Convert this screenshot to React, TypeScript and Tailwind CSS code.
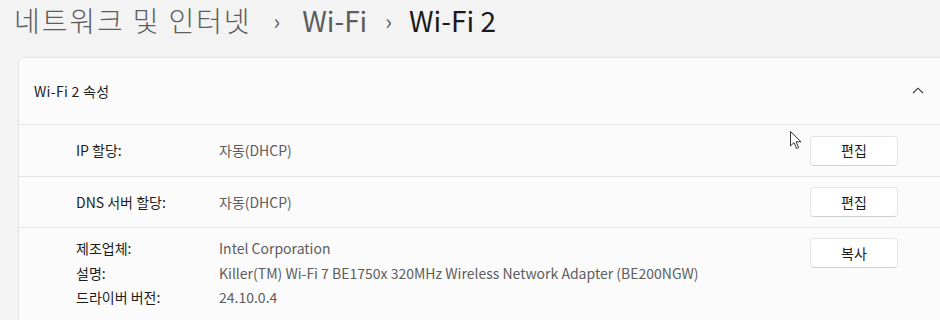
import React from "react";

const font = { fontFamily: '"Segoe UI", "Noto Sans CJK KR", sans-serif' };

function Btn({ children }: { children: React.ReactNode }) {
  return (
    <button className="w-[88px] h-[30px] shrink-0 rounded-[4px] bg-white border border-[#e5e5e5] border-b-[#cfcfcf] text-[14px] text-[#1b1b1b] flex items-center justify-center">
      {children}
    </button>
  );
}

function Cursor() {
  return (
    <svg
      className="absolute left-[789px] top-[130px]"
      width="14"
      height="21"
      viewBox="0 0 14 21"
    >
      <path
        d="M1.5 1.5 L1.5 16 L5 12.6 L7.6 18.5 L9.6 17.6 L7.1 11.8 L12 11.8 Z"
        fill="#fff"
        stroke="#333"
        strokeWidth="1"
        strokeLinejoin="round"
      />
    </svg>
  );
}

export default function App() {
  return (
    <div
      className="relative w-[940px] h-[320px] overflow-hidden bg-[#f3f3f3]"
      style={font}
    >
      <div className="h-[57px] pl-[14px] flex items-start pt-[1px] text-[28px] leading-[38px]">
        <span className="text-[#5c5c5c] tracking-[1.9px] font-light">네트워크 및 인터넷</span>
        <span className="text-[#5c5c5c] text-[22px] ml-[22px] mr-[22px]">›</span>
        <span className="text-[#5c5c5c]">Wi-Fi</span>
        <span className="text-[#5c5c5c] text-[22px] ml-[18px] mr-[17px]">›</span>
        <span className="text-[#1a1a1a]">Wi-Fi 2</span>
      </div>
      <div className="ml-[18px] w-[940px] rounded-t-[6px] border border-[#e5e5e5] bg-[#fbfbfb]">
        <div className="h-[67px] flex items-center pl-[15px] border-b border-[#e5e5e5]">
          <span className="text-[14px] text-[#1b1b1b] tracking-[0.3px]">Wi-Fi 2 속성</span>
          <svg
            className="ml-auto mr-[33px]"
            width="12"
            height="8"
            viewBox="0 0 12 8"
          >
            <path d="M1 6 L6 1.2 L11 6" fill="none" stroke="#333" strokeWidth="1.1" />
          </svg>
        </div>
        <div className="h-[52px] flex items-center border-b border-[#e5e5e5] text-[14px]">
          <div className="w-[200px] pl-[57px] text-[#1b1b1b]">IP 할당:</div>
          <div className="flex-1 text-[#5d5d5d]">자동(DHCP)</div>
          <div className="mr-[59px]">
            <Btn>편집</Btn>
          </div>
        </div>
        <div className="h-[51px] flex items-center border-b border-[#e5e5e5] text-[14px]">
          <div className="w-[200px] pl-[57px] text-[#1b1b1b]">DNS 서버 할당:</div>
          <div className="flex-1 text-[#5d5d5d]">자동(DHCP)</div>
          <div className="mr-[59px]">
            <Btn>편집</Btn>
          </div>
        </div>
        <div className="h-[100px] flex items-start pt-[8px] text-[14px] leading-[24.5px]">
          <div className="w-[200px] pl-[57px] text-[#1b1b1b] flex flex-col">
            <span>제조업체:</span>
            <span>설명:</span>
            <span>드라이버 버전:</span>
          </div>
          <div className="flex-1 text-[#5d5d5d] flex flex-col">
            <span>Intel Corporation</span>
            <span>Killer(TM) Wi-Fi 7 BE1750x 320MHz Wireless Network Adapter (BE200NGW)</span>
            <span>24.10.0.4</span>
          </div>
          <div className="mr-[59px] pt-[2px]">
            <Btn>복사</Btn>
          </div>
        </div>
      </div>
      <Cursor />
    </div>
  );
}
